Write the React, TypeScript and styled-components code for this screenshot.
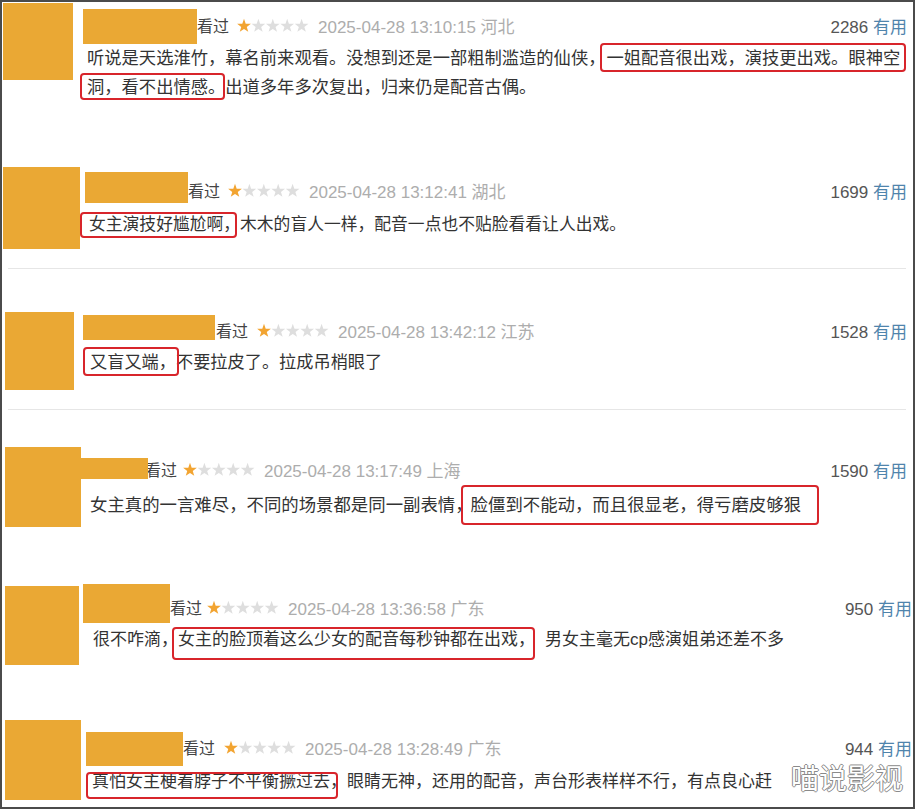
import React from "react";
import styled, { createGlobalStyle } from "styled-components";

const FRAME = 2;
const INNER_RIGHT = 913;
const HEAD_H = 40;

type Hl = { t: string; l: number; r: number; top: number; bot: number; ml?: number; mr?: number };
type Seg = string | Hl;

interface ReviewData {
  top: number;
  bottom: number;
  avatar: [number, number, number, number];
  name: [number, number, number, number];
  headY: number;
  kanX: number;
  starsX: number;
  date: string;
  count: string;
  countRight: number;
  textX: number;
  lineY: number;
  lh: number;
  fs: number;
  lines: Seg[][];
  divider?: boolean;
}

const reviews: ReviewData[] = [
  {
    top: 2, bottom: 150,
    avatar: [3, 3, 70, 77], name: [83, 9, 114, 35],
    headY: 25, kanX: 197, starsX: 237,
    date: "2025-04-28 13:10:15 河北", count: "2286", countRight: 907,
    textX: 87, lineY: 58, lh: 29, fs: 17.3,
    lines: [
      ["听说是天选淮竹，幕名前来观看。没想到还是一部粗制滥造的仙侠，",
        { t: "一姐配音很出戏，演技更出戏。眼神空", l: 6, r: 6, top: -15, bot: 14, ml: 1 }],
      [{ t: "洞，看不出情感。", l: 7, r: 0, top: -14, bot: 13 }, "出道多年多次复出，归来仍是配音古偶。"],
    ],
  },
  {
    top: 150, bottom: 269,
    avatar: [3, 167, 77, 82], name: [85, 172, 103, 31],
    headY: 190, kanX: 188, starsX: 228,
    date: "2025-04-28 13:12:41 湖北", count: "1699", countRight: 907,
    textX: 89, lineY: 225, lh: 28, fs: 16.8,
    lines: [[{ t: "女主演技好尴尬啊，", l: 9, r: -3, top: -13, bot: 13 }, "木木的盲人一样，配音一点也不贴脸看看让人出戏。"]],
    divider: true,
  },
  {
    top: 269, bottom: 410,
    avatar: [5, 312, 69, 78], name: [83, 315, 132, 25],
    headY: 330, kanX: 216, starsX: 257,
    date: "2025-04-28 13:42:12 江苏", count: "1528", countRight: 907,
    textX: 90, lineY: 362, lh: 28, fs: 17.2,
    lines: [[{ t: "又盲又端，", l: 7, r: 3, top: -15, bot: 14 }, "不要拉皮了。拉成吊梢眼了"]],
    divider: true,
  },
  {
    top: 410, bottom: 545,
    avatar: [5, 447, 76, 80], name: [81, 458, 67, 21],
    headY: 469, kanX: 145, starsX: 183,
    date: "2025-04-28 13:17:49 上海", count: "1590", countRight: 907,
    textX: 90, lineY: 505, lh: 28, fs: 17.4,
    lines: [["女主真的一言难尽，不同的场景都是同一副表情，",
      { t: "脸僵到不能动，而且很显老，得亏磨皮够狠", l: 10, r: 18, top: -20, bot: 20, ml: -2 }]],
  },
  {
    top: 545, bottom: 690,
    avatar: [5, 586, 74, 79], name: [83, 584, 87, 39],
    headY: 607, kanX: 170, starsX: 207,
    date: "2025-04-28 13:36:58 广东", count: "950", countRight: 912,
    textX: 93, lineY: 640, lh: 28, fs: 17,
    lines: [["很不咋滴，",
      { t: "女主的脸顶着这么少女的配音每秒钟都在出戏，", l: 6, r: 0, top: -13, bot: 20, mr: 10 },
      "男女主毫无cp感演姐弟还差不多"]],
  },
  {
    top: 690, bottom: 807,
    avatar: [5, 720, 76, 80], name: [86, 732, 97, 34],
    headY: 747, kanX: 183, starsX: 224,
    date: "2025-04-28 13:28:49 广东", count: "944", countRight: 912,
    textX: 92, lineY: 782, lh: 28, fs: 17,
    lines: [[{ t: "真怕女主梗着脖子不平衡撅过去", l: 6, r: 8, top: -10, bot: 17 },
      "，眼睛无神，还用的配音，声台形表样样不行，有点良心赶"]],
  },
];

const starPoints = (cx: number, cy: number, R: number, r: number) => {
  const pts: string[] = [];
  for (let i = 0; i < 10; i++) {
    const rad = i % 2 === 0 ? R : r;
    const a = -Math.PI / 2 + (i * Math.PI) / 5;
    pts.push(`${(cx + rad * Math.cos(a)).toFixed(2)},${(cy + rad * Math.sin(a)).toFixed(2)}`);
  }
  return pts.join(" ");
};

const Stars = ({ value, ml }: { value: number; ml: number }) => (
  <StarSvg width="72" height="15" viewBox="0 0 72 15" $ml={ml}>
    {[0, 1, 2, 3, 4].map(i => (
      <polygon key={i} points={starPoints(7 + i * 14.4, 8, 7.2, 2.9)} fill={i < value ? "#f2a431" : "#dedede"} />
    ))}
  </StarSvg>
);

const Review = ({ d }: { d: ReviewData }) => {
  const [ax, ay, aw, ah] = d.avatar;
  const [nx, ny, nw, nh] = d.name;
  const headTop = d.headY - HEAD_H / 2;
  return (
    <Row $h={d.bottom - d.top}>
      <Main>
        <Avatar $ml={ax - FRAME} $mt={ay - d.top} $w={aw} $h={ah} />
        <Body $ml={nx - (ax + aw)} $mr={INNER_RIGHT - d.countRight} $pt={headTop - d.top}>
          <Header>
            <NameBlock $mt={ny - headTop} $w={nw} $h={nh} />
            <Kan $ml={d.kanX - (nx + nw)}>看过</Kan>
            <Stars value={1} ml={d.starsX - d.kanX - 32} />
            <DateText>{d.date}</DateText>
            <Count>
              {d.count} <Useful>有用</Useful>
            </Count>
          </Header>
          <Comment $mt={d.lineY - d.lh / 2 - (d.headY + HEAD_H / 2)} $pl={d.textX - nx} $fs={d.fs} $lh={d.lh}>
            {d.lines.map((line, i) => (
              <Line key={i} $lh={d.lh}>
                {line.map((seg, j) =>
                  typeof seg === "string" ? (
                    <span key={j}>{seg}</span>
                  ) : (
                    <Highlight key={j} $l={seg.l} $r={seg.r} $top={d.lh / 2 + seg.top} $bh={seg.bot - seg.top} $ml={seg.ml || 0} $mr={seg.mr || 0}>
                      {seg.t}
                    </Highlight>
                  )
                )}
              </Line>
            ))}
          </Comment>
        </Body>
      </Main>
      {d.divider && <Divider />}
    </Row>
  );
};

export default function App() {
  return (
    <>
      <GlobalStyle />
      <Frame>
        {reviews.map((r, i) => (
          <Review key={i} d={r} />
        ))}
        <Watermark>喵说影视</Watermark>
      </Frame>
    </>
  );
}

const GlobalStyle = createGlobalStyle`
  html, body {
    margin: 0;
    padding: 0;
    background: #fff;
  }
  body {
    font-family: "Liberation Sans", "Noto Sans CJK SC", Arial, sans-serif;
  }
`;

const Frame = styled.div`
  position: relative;
  width: 915px;
  height: 809px;
  box-sizing: border-box;
  border: 2px solid #4b4b4b;
  background: #fff;
  overflow: hidden;
  display: flex;
  flex-direction: column;
`;

const Row = styled.div<{ $h: number }>`
  height: ${p => p.$h}px;
  flex-shrink: 0;
  display: flex;
  flex-direction: column;
`;

const Main = styled.div`
  flex: 1;
  min-height: 0;
  display: flex;
  align-items: flex-start;
`;

const Avatar = styled.div<{ $ml: number; $mt: number; $w: number; $h: number }>`
  flex-shrink: 0;
  margin-left: ${p => p.$ml}px;
  margin-top: ${p => p.$mt}px;
  width: ${p => p.$w}px;
  height: ${p => p.$h}px;
  background: #eaa834;
`;

const Body = styled.div<{ $ml: number; $mr: number; $pt: number }>`
  flex: 1;
  min-width: 0;
  margin-left: ${p => p.$ml}px;
  margin-right: ${p => p.$mr}px;
  padding-top: ${p => p.$pt}px;
`;

const Header = styled.div`
  height: ${HEAD_H}px;
  display: flex;
  align-items: center;
  white-space: nowrap;
`;

const NameBlock = styled.div<{ $mt: number; $w: number; $h: number }>`
  position: relative;
  z-index: 1;
  flex-shrink: 0;
  align-self: flex-start;
  margin-top: ${p => p.$mt}px;
  width: ${p => p.$w}px;
  height: ${p => p.$h}px;
  background: #eaa834;
`;

const Kan = styled.span<{ $ml: number }>`
  display: inline-block;
  flex-shrink: 0;
  width: 32px;
  margin-left: ${p => p.$ml}px;
  font-size: 16px;
  color: #444;
`;

const StarSvg = styled.svg<{ $ml: number }>`
  flex-shrink: 0;
  margin-left: ${p => p.$ml}px;
`;

const DateText = styled.span`
  margin-left: 9px;
  font-size: 17px;
  color: #adadad;
`;

const Count = styled.span`
  margin-left: auto;
  font-size: 17px;
  color: #555;
`;

const Useful = styled.span`
  color: #4f84ac;
`;

const Comment = styled.div<{ $mt: number; $pl: number; $fs: number; $lh: number }>`
  margin-top: ${p => p.$mt}px;
  padding-left: ${p => p.$pl}px;
  font-size: ${p => p.$fs}px;
  line-height: ${p => p.$lh}px;
  color: #333;
  white-space: nowrap;
`;

const Line = styled.div<{ $lh: number }>`
  height: ${p => p.$lh}px;
`;

const Highlight = styled.span<{ $l: number; $r: number; $top: number; $bh: number; $ml: number; $mr: number }>`
  position: relative;
  display: inline-block;
  margin-left: ${p => p.$ml}px;
  margin-right: ${p => p.$mr}px;
  &::after {
    content: "";
    position: absolute;
    left: ${p => -p.$l}px;
    right: ${p => -p.$r}px;
    top: ${p => p.$top}px;
    height: ${p => p.$bh}px;
    box-sizing: border-box;
    border: 2px solid #d8252b;
    border-radius: 4px;
  }
`;

const Divider = styled.div`
  flex-shrink: 0;
  height: 1px;
  margin: 0 7px 0 6px;
  background: #e6e6e6;
`;

const Watermark = styled.div`
  position: absolute;
  left: 789px;
  top: 761px;
  font-family: "Noto Sans CJK SC", sans-serif;
  font-size: 28px;
  line-height: 1;
  color: #fff;
  text-shadow: 1px 0 0 #8a8a8a, -1px 0 0 #8a8a8a, 0 1px 0 #8a8a8a, 0 -1px 0 #8a8a8a;
`;
